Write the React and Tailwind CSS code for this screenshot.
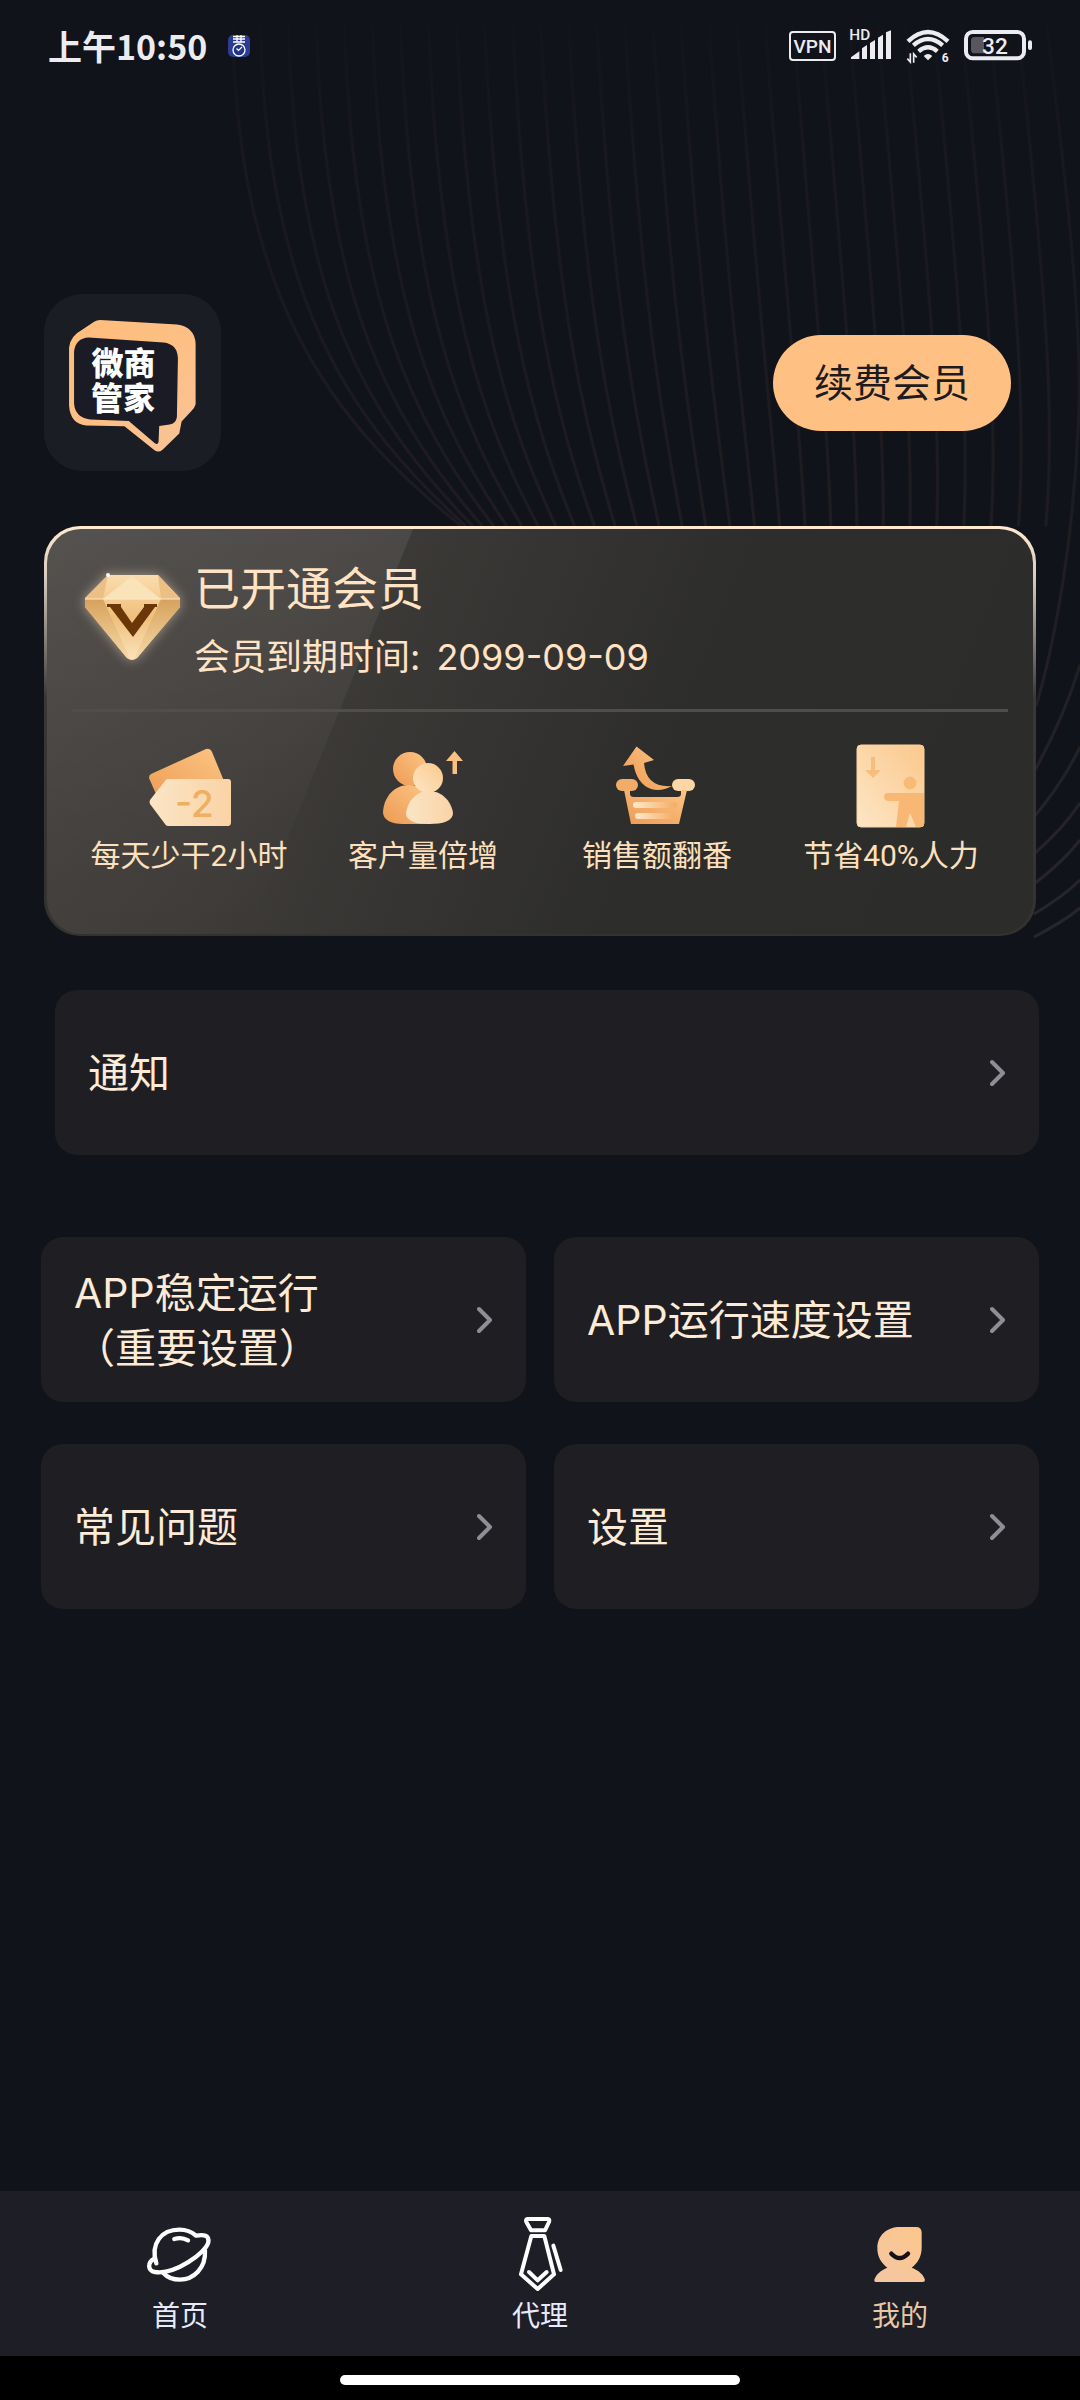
import React, { useState } from 'react';
import clsx from 'clsx';

const settings = [
  { id: 'stable', lines: ['APP稳定运行', '（重要设置）'] },
  { id: 'speed', lines: ['APP运行速度设置'] },
  { id: 'faq', lines: ['常见问题'] },
  { id: 'settings', lines: ['设置'] },
];

// outer lines: y at the page edge, y at the right edge of the member card
const outerLines = [
  [665, 770],
  [747, 815],
  [803, 852],
  [840, 882],
  [880, 912],
  [908, 935],
];

const BackgroundLines = () => (
  <svg className="absolute top-0 right-0 w-[1080px] h-[940px] pointer-events-none" viewBox="0 0 1080 940" fill="none" aria-hidden="true">
    <defs>
      <linearGradient id="lineFade" gradientUnits="userSpaceOnUse" x1="0" y1="10" x2="0" y2="940">
        <stop offset="0" stopColor="#3a2830" stopOpacity="0" />
        <stop offset="0.15" stopColor="#3a2830" stopOpacity="0.2" />
        <stop offset="0.5" stopColor="#40302f" stopOpacity="0.28" />
        <stop offset="1" stopColor="#50484a" stopOpacity="0.36" />
      </linearGradient>
    </defs>
    <g stroke="url(#lineFade)" strokeWidth="3">
      {Array.from({ length: 29 }, (_, i) => {
        const top = 232 + 28 * i;
        const shift = 229 * Math.exp(-i / 9);
        return (
          <path
            key={i}
            d={`M${top} 10 C${top + 3 + i} 300 ${top + shift * 0.43 + i * 1.25} 420 ${top + shift + i * 0.7} 526`}
          />
        );
      })}
      <path d="M1045 10C1062 150 1085 330 1078 430C1072 560 1050 660 1036 706" />
      {outerLines.map(([edge, end]) => (
        <path key={end} d={`M1080 ${edge} Q1064 ${edge + (end - edge) * 0.5} 1034 ${end + 2}`} />
      ))}
    </g>
  </svg>
);

const StatusBar = () => (
  <div className="relative h-[92px] pl-12 pr-12 flex items-center justify-between text-[#ececf0]">
    <div className="flex items-center gap-5">
      <span className="text-[34px] leading-[40px] font-bold font-['Noto_Sans_CJK_SC','Noto_Sans_CJK_TC',sans-serif]">上午10:50</span>
      <svg className="w-6 h-6" viewBox="0 0 24 24" fill="none" aria-hidden="true">
        <rect x="1" y="1" width="22" height="22" rx="5" fill="#2b3c92" />
        <path d="M6 2.500H18M6 5H18M6 8H18M10 1V8M14 1V8" stroke="#fff" strokeWidth="1.300" />
        <circle cx="12" cy="16" r="6" fill="#20358c" stroke="#fff" strokeWidth="1.300" />
        <path d="M9.500 14.500L11.500 16.500L15 13" stroke="#fff" strokeWidth="1.200" />
      </svg>
    </div>
    <div className="flex items-center gap-[14px]">
      <span className="w-[47px] h-[30px] flex items-center justify-center border-2 border-[#ececf0] rounded-[4px] text-[19px] leading-none font-medium font-[Roboto,sans-serif]">VPN</span>
      <svg className="w-[42px] h-9 overflow-visible" viewBox="327 84 126 108" fill="#ececf0" role="img" aria-label="signal">
        <text x="325" y="120" fontSize="46" fontWeight="500" fontFamily="Roboto, sans-serif">HD</text>
        <path d="M330 177V172L355 154V177ZM363 177V145L378 135V177ZM387 177V129L402 120V177ZM411 177V113L426 104V177ZM435 177V97L450 91V177Z" />
      </svg>
      <svg className="w-11 h-9" viewBox="495 84 132 108" fill="none" role="img" aria-label="wifi">
        <g stroke="#ececf0" strokeWidth="13">
          <path d="M501 124Q561 68 621 124" />
          <path d="M517 136Q561 98 605 136" />
          <path d="M533 154Q561 130 589 154" />
        </g>
        <path d="M548 168Q561 156 574 168L561 181Z" fill="#ececf0" />
        <path d="M508 160V186L499 176M518 188V162L527 172" stroke="#ececf0" strokeWidth="5" />
        <text x="602" y="186" fontSize="36" fontWeight="700" fontFamily="Roboto, sans-serif" fill="#ececf0">6</text>
      </svg>
      <svg className="w-[68px] h-9" viewBox="672 84 204 108" fill="none" role="img" aria-label="battery">
        <rect x="678" y="96" width="174" height="79" rx="20" stroke="#ececf0" strokeWidth="12" />
        <path d="M693 122Q693 111 704 111H732V160H704Q693 160 693 149Z" fill="#57575d" />
        <rect x="864" y="121" width="12" height="29" rx="6" fill="#ececf0" />
        <text x="765" y="162" fontSize="68" fontWeight="500" textAnchor="middle" fontFamily="Roboto, sans-serif" fill="#ececf0">32</text>
      </svg>
    </div>
  </div>
);

const Logo = () => (
  <svg className="w-[177px] h-[177px] rounded-[38px] bg-[#1b1d24]" viewBox="132 102 530 530" role="img" aria-label="微商管家">
    <defs>
      <linearGradient id="logoSide" x1="0" y1="0" x2="1" y2="1">
        <stop offset="0" stopColor="#ffbd7c" />
        <stop offset="0.55" stopColor="#fdbf85" />
        <stop offset="1" stopColor="#f8c49a" />
      </linearGradient>
    </defs>
    <path
      d="M300 180L530 193Q583 200 586 250V432Q584 442 572 454L544 484L537 520L487 568Q475 578 463 570L373 498L258 496Q210 490 207 435V262Q211 228 245 210L282 185Q290 180 300 180Z"
      fill="url(#logoSide)"
    />
    <path
      d="M266 232L490 247Q532 252 533 295L530 470Q527 490 508 493L477 497L475 545Q472 555 463 548L386 482L270 478Q225 472 222 430V275Q226 234 266 232Z"
      fill="#1b1b25"
    />
    <g fill="#fff" fontSize="96" fontWeight="900" fontFamily="'Noto Sans CJK SC', sans-serif">
      <text x="274" y="345">微商</text>
      <text x="273" y="450">管家</text>
    </g>
  </svg>
);

const Diamond = () => (
  <svg className="w-[100px] h-24 mt-2 overflow-visible drop-shadow-[0_0_6px_rgba(255,228,200,0.5)]" viewBox="82 568 100 96" aria-hidden="true">
    <defs>
      <linearGradient id="gemBase" x1="0" y1="0" x2="0" y2="1">
        <stop offset="0" stopColor="#fbdcae" />
        <stop offset="0.5" stopColor="#efc07c" />
        <stop offset="1" stopColor="#fbe3bd" />
      </linearGradient>
      <linearGradient id="gemSide" x1="0" y1="0" x2="0" y2="1">
        <stop offset="0" stopColor="#d6a25c" />
        <stop offset="1" stopColor="#f7d9a8" />
      </linearGradient>
    </defs>
    <path d="M108 575H158L180 598V607L137 658Q132 662 127 658L85 607V598Z" fill="url(#gemBase)" />
    <path d="M108 575L103 599H85ZM158 575L161 599H180Z" fill="#ecc084" />
    <path d="M132 576L103 599H161Z" fill="#fbe3b9" />
    <path d="M85 599H103L130 659L127 658L85 607Z" fill="url(#gemSide)" />
    <path d="M180 599H161L134 659L137 658L180 607Z" fill="url(#gemSide)" />
    <path d="M85 599H180" stroke="#ffe9c6" strokeWidth="1" />
    <path d="M107 604H121V607L132 623L144 607V604H157V607H155L133 637L110 607H107Z" fill="#6b3608" />
    <circle cx="108" cy="575" r="2" fill="#fff" />
  </svg>
);

const IconDefs = () => (
  <svg className="absolute w-0 h-0" aria-hidden="true">
    <defs>
      <linearGradient id="deep" x1="1" y1="0" x2="0" y2="1">
        <stop offset="0" stopColor="#fdc583" />
        <stop offset="1" stopColor="#ec9b55" />
      </linearGradient>
      <linearGradient id="pale" x1="0" y1="1" x2="1" y2="0">
        <stop offset="0" stopColor="#fde6c6" />
        <stop offset="1" stopColor="#fbc88c" />
      </linearGradient>
      <linearGradient id="paleFlat" x1="0" y1="0" x2="1" y2="0">
        <stop offset="0" stopColor="#fbe5c6" />
        <stop offset="1" stopColor="#fad3a6" />
      </linearGradient>
      <linearGradient id="slot" x1="0" y1="0" x2="1" y2="0">
        <stop offset="0" stopColor="#fee9ca" />
        <stop offset="1" stopColor="#f4ac66" />
      </linearGradient>
    </defs>
  </svg>
);

const TicketIcon = () => (
  <svg className="w-[84px] h-[84px] overflow-visible" viewBox="0 0 84 84" aria-hidden="true">
    <path d="M4 30L59 5Q63 4 65 8L77 37L40 60L9 50L2 34Q2 31 4 30Z" fill="url(#deep)" />
    <path d="M21 35H81Q84 35 84 38V78Q84 82 81 82H21Q19 82 18 80L3 60Q2 58 3 56L18 37Q19 35 21 35Z" fill="url(#paleFlat)" />
    <text x="28" y="73" fontSize="37" fontWeight="500" fontFamily="Inter, sans-serif" fill="#eeb060">-2</text>
  </svg>
);

const PeopleIcon = () => (
  <svg className="w-[84px] h-[84px]" viewBox="0 0 84 84" aria-hidden="true">
    <circle cx="29" cy="25" r="17" fill="url(#deep)" />
    <path d="M2 68C3 52 14 41 28 41C42 41 50 52 50 80H22C10 80 2 76 2 68Z" fill="url(#deep)" />
    <circle cx="47" cy="34" r="15" fill="url(#pale)" />
    <path d="M25 69C27 56 36 47 48 47C60 47 70 56 72 69C72 77 62 80 48 80C34 80 25 77 25 69Z" fill="url(#paleFlat)" />
    <path d="M73.500 7L82 17H76V30H71.500V17H65Z" fill="#f9c083" />
  </svg>
);

const BasketIcon = () => (
  <svg className="w-[84px] h-[84px]" viewBox="0 0 84 84" aria-hidden="true">
    <path d="M21.500 2.500L39 16L29 19Q31 44 57 42Q46 48 36 45Q22 40 18.500 20.500L8 22Z" fill="url(#deep)" />
    <rect x="1" y="35" width="22" height="12" rx="6" fill="#f2ac69" />
    <rect x="57" y="35" width="23" height="12" rx="6" fill="#fcd6a4" />
    <path d="M9 46H15V50Q15 53 19 53H62Q66 53 66 50V46H72L64 80H16Z" fill="url(#deep)" />
    <rect x="18" y="58" width="44" height="6" rx="3" fill="url(#slot)" />
    <rect x="20" y="69" width="40" height="6" rx="3" fill="url(#slot)" />
  </svg>
);

const DoorIcon = () => (
  <svg className="w-[84px] h-[84px]" viewBox="0 0 84 84" aria-hidden="true">
    <rect x="8" y="1" width="67" height="82" rx="4" fill="url(#pale)" stroke="#fbd3a0" strokeWidth="1" />
    <path d="M22 13H26V26H32L24 34L16 26H22Z" fill="#f6bd7c" />
    <circle cx="61" cy="39" r="6.500" fill="#f8bb76" />
    <path d="M39 49H75V80Q75 83 72 83H67L61 69L57 83H47L50 57H39Q35 56 35 53Q35 49 39 49Z" fill="#f8b874" />
  </svg>
);

const benefits = [
  { label: '每天少干2小时', icon: TicketIcon },
  { label: '客户量倍增', icon: PeopleIcon },
  { label: '销售额翻番', icon: BasketIcon },
  { label: '节省40%人力', icon: DoorIcon },
];

const MemberCard = () => (
  <section className="relative mx-11 mt-[55px] rounded-[36px] pt-[3px] px-[3px] pb-[2px] bg-[linear-gradient(180deg,#ffe9cf_0%,#d9cdc0_12%,#393836_42%,#333230_100%)]">
    <div className="relative overflow-hidden rounded-[34px] bg-[linear-gradient(112deg,#464340_0%,#3f3c39_25%,#2d2d2c_62%,#2c2c2b_100%)]">
      {/* Sheen */}
      <svg className="absolute top-0 left-0 w-[368px] h-full" viewBox="0 0 368 404" preserveAspectRatio="none" aria-hidden="true">
        <defs>
          <linearGradient id="sheen" x1="0" y1="0" x2="0" y2="1">
            <stop offset="0" stopColor="#fff" stopOpacity="0.08" />
            <stop offset="0.8" stopColor="#fff" stopOpacity="0.01" />
            <stop offset="1" stopColor="#fff" stopOpacity="0" />
          </linearGradient>
        </defs>
        <path d="M0 0H366L202 404H0Z" fill="url(#sheen)" />
      </svg>

      <div className="relative px-[25px] pt-[31px] pb-[58px]">
        <div className="flex items-start gap-3 pl-[10px]">
          <Diamond />
          <div className="text-[#ffe3c4]">
            <h2 className="text-[46px] leading-[56px]">已开通会员</h2>
            <p className="mt-[17px] flex gap-4 text-[36px] leading-[48px]">
              <span>会员到期时间:</span>
              <span>2099-09-09</span>
            </p>
          </div>
        </div>

        <hr className="mt-[28px] border-0 h-[3px] bg-[#504e48]" />

        <ul className="mt-8 grid grid-cols-4">
          {benefits.map(({ label, icon: Icon }) => (
            <li key={label} className="flex flex-col items-center">
              <Icon />
              <span className="mt-2 text-[30px] leading-[40px] text-[#fde0bd] whitespace-nowrap font-[Roboto,'Noto_Sans_CJK_SC',sans-serif]">{label}</span>
            </li>
          ))}
        </ul>
      </div>
    </div>
  </section>
);

const MenuCard = ({ lines }) => (
  <button type="button" className="w-full min-h-[165px] px-[33px] rounded-[22px] bg-[#1f1e22] flex items-center justify-between text-left cursor-pointer">
    <span className="pt-[2px] text-[41px] leading-[55px] text-[#fdebd7]">
      {lines.map(line => (
        <span key={line} className="block">{line}</span>
      ))}
    </span>
    <svg className="w-4 h-7 shrink-0" viewBox="0 0 16 28" fill="none" stroke="#8f8e95" strokeWidth="4" strokeLinecap="round" strokeLinejoin="round" aria-hidden="true">
      <path d="M2 3L13 14L2 25" />
    </svg>
  </button>
);

const PlanetIcon = () => (
  <svg className="w-[76px] h-[76px]" viewBox="126 108 228 228" fill="none" stroke="#fff" strokeWidth="13" strokeLinecap="round" strokeLinejoin="round" aria-hidden="true">
    <path d="M169 250C150 190 185 149 238 149C262 149 278 158 288 167C312 163 328 165 325 187C318 218 225 285 165 276C142 272 142 247 163 236" />
    <path d="M315 212C318 265 280 299 240 299C217 299 200 290 190 279" />
    <path d="M223 177C238 172 252 174 264 181" />
  </svg>
);

const TieIcon = () => (
  <svg className="w-[76px] h-[76px]" viewBox="1206 108 228 228" fill="none" stroke="#fff" strokeWidth="12" strokeLinecap="round" strokeLinejoin="round" aria-hidden="true">
    <path d="M1282 117H1344Q1350 118 1347 126L1335 151H1293L1279 126Q1276 118 1282 117Z" />
    <path d="M1294 168H1333L1362 283L1313 327L1263 283Z" />
    <path d="M1287 276L1313 301L1340 276" />
    <path d="M1360 197L1382 270" />
  </svg>
);

const MeIcon = () => (
  <svg className="w-[76px] h-[76px]" viewBox="186 108 228 228" fill="none" aria-hidden="true">
    <defs>
      <linearGradient id="me" x1="1" y1="0" x2="0" y2="1">
        <stop offset="0" stopColor="#fdc58a" />
        <stop offset="1" stopColor="#f3c7a4" />
      </linearGradient>
    </defs>
    <path
      d="M300 141H348Q365 141 365 158V203C365 230 352 250 335 263C355 270 372 285 375 300Q375 306 368 306H230Q222 306 223 299C228 284 243 270 262 263C245 250 232 232 232 205C232 165 262 141 300 141Z"
      fill="url(#me)"
    />
    <path d="M274 221Q299 247 324 221" stroke="#17101a" strokeWidth="13" strokeLinecap="round" />
  </svg>
);

const tabs = [
  { id: 'home', label: '首页', icon: PlanetIcon },
  { id: 'agent', label: '代理', icon: TieIcon },
  { id: 'me', label: '我的', icon: MeIcon },
];

const App = () => {
  const [activeTab, setActiveTab] = useState('me');

  return (
    <div className="relative min-h-screen flex flex-col overflow-hidden bg-[#11131b] font-[Inter,'Noto_Sans_CJK_SC',sans-serif]">
      <BackgroundLines />
      <IconDefs />
      <StatusBar />

      <header className="relative pt-[202px] pl-11 pr-[69px] flex items-center justify-between">
        <Logo />
        <button type="button" className="h-24 px-[41px] rounded-full bg-[#ffc183] text-[39px] leading-[48px] text-[#1d1b20] cursor-pointer">
          续费会员
        </button>
      </header>

      <main className="relative flex-1">
        <MemberCard />

        <div className="mt-[54px] ml-[55px] mr-[41px]">
          <MenuCard lines={['通知']} />
        </div>

        <div className="mt-[82px] mx-[41px] grid grid-cols-2 gap-x-7 gap-y-[42px]">
          {settings.map(item => (
            <MenuCard key={item.id} lines={item.lines} />
          ))}
        </div>
      </main>

      <nav className="relative grid grid-cols-3 bg-[#1d1e26]">
        {tabs.map(({ id, label, icon: Icon }) => (
          <button
            key={id}
            type="button"
            onClick={() => setActiveTab(id)}
            className="pt-[25px] pb-5 flex flex-col items-center cursor-pointer"
          >
            <Icon />
            <span className={clsx('mt-1 text-[28px] leading-[40px]', activeTab === id ? 'text-[#e6c8a8]' : 'text-[#e6ebfb]')}>{label}</span>
          </button>
        ))}
      </nav>

      {/* Home indicator */}
      <div className="relative h-11 pt-[19px] bg-black">
        <div className="mx-auto w-[400px] h-[10px] rounded-full bg-white"></div>
      </div>
    </div>
  );
};

export default App;
